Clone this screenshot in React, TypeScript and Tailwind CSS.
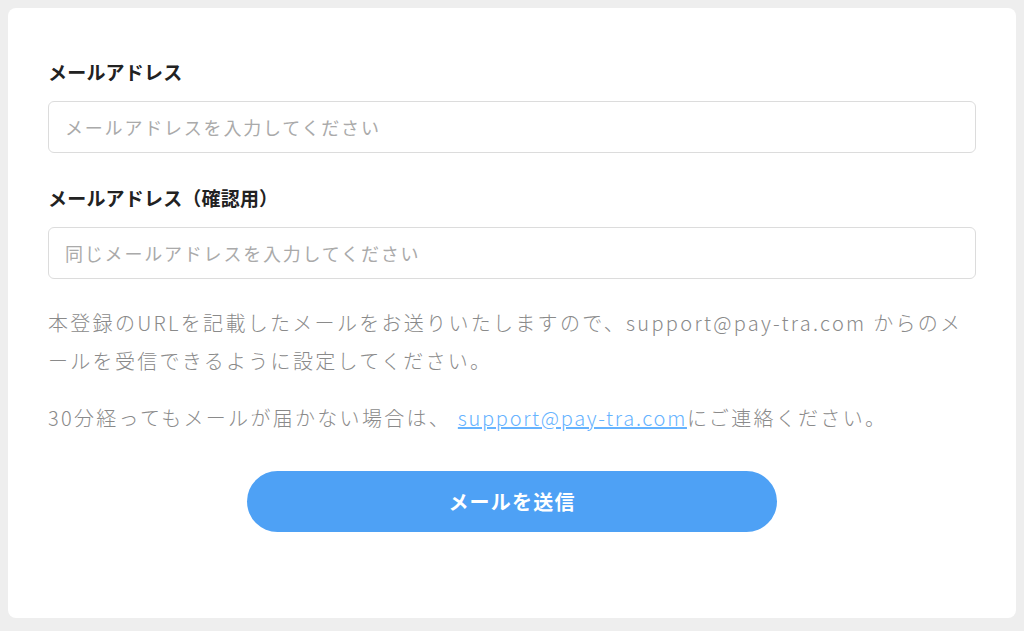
export default function App() {
  return (
    <div className="min-h-[631px] bg-[#eeeeee] p-2 font-['Noto_Sans_CJK_JP','Noto_Sans',sans-serif]">
      <div className="rounded-lg bg-white px-10 pt-[50px] pb-[86px]">
        <label className="block text-[19px] font-bold leading-[28px] tracking-[0.01em] text-[#222]">
          メールアドレス
        </label>
        <input
          type="email"
          placeholder="メールアドレスを入力してください"
          className="mt-[15px] block h-[52px] w-full rounded-md border border-[#dcdcdc] px-4 text-[18px] tracking-[0.1em] outline-none placeholder:text-[#aaaaaa]"
        />
        <label className="mt-[31px] block text-[19px] font-bold leading-[28px] tracking-[0.01em] text-[#222]">
          メールアドレス（確認用）
        </label>
        <input
          type="email"
          placeholder="同じメールアドレスを入力してください"
          className="mt-[15px] block h-[52px] w-full rounded-md border border-[#dcdcdc] px-4 text-[18px] tracking-[0.1em] outline-none placeholder:text-[#aaaaaa]"
        />
        <p className="mt-[25px] text-[20px] font-light leading-[38px] tracking-[0.115em] text-[#8a8a8a]">
          本登録のURLを記載したメールをお送りいたしますので、support@pay-tra.com からのメールを受信できるように設定してください。
        </p>
        <p className="mt-[19px] text-[20px] font-light leading-[38px] tracking-[0.115em] text-[#8a8a8a]">
          30分経ってもメールが届かない場合は、{" "}
          <a href="#" className="tracking-[0.085em] text-[#66b3ff] underline">
            support@pay-tra.com
          </a>
          にご連絡ください。
        </p>
        <div className="mt-[34px] flex justify-center">
          <button className="h-[61px] w-[530px] rounded-full bg-[#4ea1f5] text-[20px] font-bold tracking-[0.06em] text-white">
            メールを送信
          </button>
        </div>
      </div>
    </div>
  );
}
